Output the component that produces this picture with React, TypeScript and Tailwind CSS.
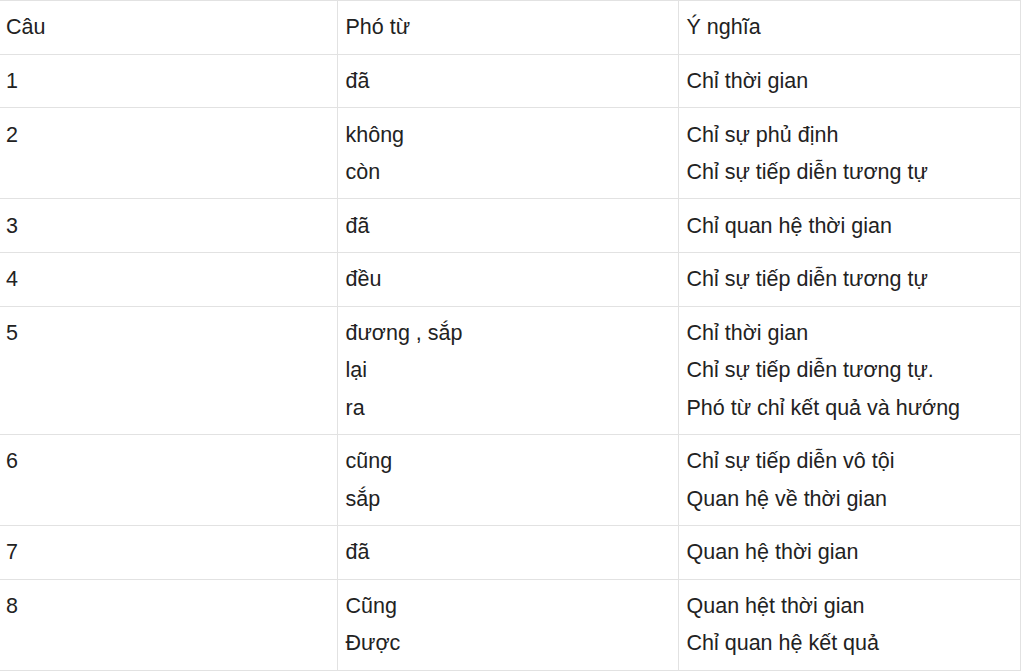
const rows: [string, string[], string[]][] = [
  ["1", ["đã"], ["Chỉ thời gian"]],
  ["2", ["không", "còn"], ["Chỉ sự phủ định", "Chỉ sự tiếp diễn tương tự"]],
  ["3", ["đã"], ["Chỉ quan hệ thời gian"]],
  ["4", ["đều"], ["Chỉ sự tiếp diễn tương tự"]],
  ["5", ["đương , sắp", "lại", "ra"], ["Chỉ thời gian", "Chỉ sự tiếp diễn tương tự.", "Phó từ chỉ kết quả và hướng"]],
  ["6", ["cũng", "sắp"], ["Chỉ sự tiếp diễn vô tội", "Quan hệ về thời gian"]],
  ["7", ["đã"], ["Quan hệ thời gian"]],
  ["8", ["Cũng", "Được"], ["Quan hệt thời gian", "Chỉ quan hệ kết quả"]],
];

function Cell({ lines, first, last }: { lines: string[]; first?: boolean; last?: boolean }) {
  return (
    <td
      className={
        "align-top pr-2 pt-[8.4px] pb-[7px] border-t border-[#e2e2e2] " +
        (first ? "pl-[6px] " : "pl-2 ") +
        (last ? "" : "border-r")
      }
    >
      {lines.map((l, i) => (
        <div key={i}>{l}</div>
      ))}
    </td>
  );
}

export default function App() {
  return (
    <div className="w-[1024px] h-[672px] overflow-hidden bg-white">
      <table
        className="w-[1020px] table-fixed border-collapse border-b border-r border-[#e2e2e2] text-[#222] text-[21.5px] leading-[37.3px]"
        style={{ fontFamily: '"Liberation Sans", Arial, sans-serif' }}
      >
        <colgroup>
          <col className="w-[337px]" />
          <col className="w-[341px]" />
          <col className="w-[342px]" />
        </colgroup>
        <tbody>
          <tr>
            <Cell first lines={["Câu"]} />
            <Cell lines={["Phó từ"]} />
            <Cell last lines={["Ý nghĩa"]} />
          </tr>
          {rows.map(([n, a, b]) => (
            <tr key={n}>
              <Cell first lines={[n]} />
              <Cell lines={a} />
              <Cell last lines={b} />
            </tr>
          ))}
        </tbody>
      </table>
    </div>
  );
}
